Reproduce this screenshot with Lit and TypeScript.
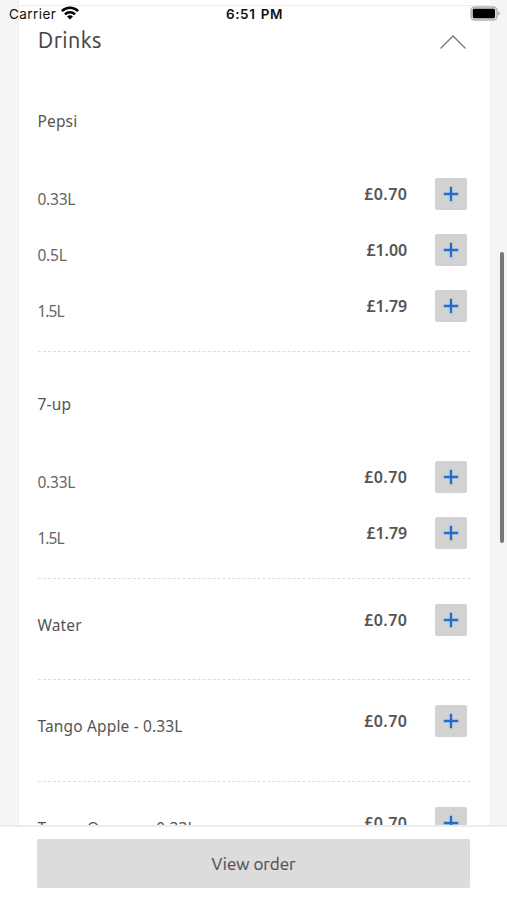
import { LitElement, html, css } from "lit";
import { customElement, property } from "lit/decorators.js";
import { classMap } from "lit/directives/class-map.js";

interface Option {
  name: string;
  price: string;
}

interface Product {
  name: string;
  price?: string;
  options?: Option[];
}

const DRINKS: Product[] = [
  {
    name: "Pepsi",
    options: [
      { name: "0.33L", price: "£0.70" },
      { name: "0.5L", price: "£1.00" },
      { name: "1.5L", price: "£1.79" },
    ],
  },
  {
    name: "7-up",
    options: [
      { name: "0.33L", price: "£0.70" },
      { name: "1.5L", price: "£1.79" },
    ],
  },
  { name: "Water", price: "£0.70" },
  { name: "Tango Apple - 0.33L", price: "£0.70" },
  { name: "Tango Orange - 0.33L", price: "£0.70" },
];

@customElement("status-bar")
class StatusBar extends LitElement {
  static styles = css`
    :host {
      display: grid;
      grid-template-columns: 1fr auto 1fr;
      align-items: center;
      height: 27px;
      padding: 0 7px 0 9px;
      box-sizing: border-box;
      color: #111;
      font: 13px/26px Inter, "Liberation Sans", sans-serif;
    }
    .carrier {
      display: flex;
      align-items: center;
      gap: 5px;
    }
    .label {
      font-size: 13.5px;
      letter-spacing: 0.45px;
    }
    .time {
      font-size: 13.5px;
      font-weight: 600;
      letter-spacing: 0.65px;
      word-spacing: 1px;
    }
    .battery {
      justify-self: end;
    }
    svg {
      display: block;
      position: relative;
      top: -0.5px;
    }
  `;

  render() {
    return html`
      <div class="carrier">
        <span class="label">Carrier</span>
        <svg width="18" height="14" viewBox="0 0 18 14" fill="none" stroke="#000" stroke-width="2.6">
          <path d="M.9 5.1a11.5 11.5 0 0 1 16.2 0" />
          <path d="M4 8.4a7 7 0 0 1 10 0" />
          <path d="M9 13.6 6 10.6a4.2 4.2 0 0 1 6 0z" fill="#000" stroke="none" />
        </svg>
      </div>
      <span class="time">6:51 PM</span>
      <svg class="battery" width="30" height="15" viewBox="0 0 30 15">
        <rect x="1" y="0.9" width="26" height="13.2" rx="3.6" fill="#ddd" stroke="#b4b4b4" stroke-width="1.5" />
        <rect x="2.8" y="2.8" width="22.2" height="9.4" rx="1.4" fill="#000" />
        <path d="M28 5.4q1.8 .6 1.8 2.1t-1.8 2.1z" fill="#aaa" />
      </svg>
    `;
  }
}

@customElement("price-action")
class PriceAction extends LitElement {
  @property() price = "";

  static styles = css`
    :host {
      display: flex;
      align-items: center;
      gap: 28px;
      height: 32px;
    }
    .price {
      font: 600 16px/32px "Noto Sans", sans-serif;
      letter-spacing: 0.45px;
      margin-right: -0.45px;
      color: #555;
    }
    .narrow {
      letter-spacing: -0.1px;
      margin-right: 0;
    }
    .add {
      display: grid;
      place-items: center;
      width: 32px;
      height: 32px;
      padding: 0;
      border: 0;
      border-radius: 2px;
      background: #d2d2d2;
    }
  `;

  render() {
    const classes = { price: true, narrow: this.price.includes("1") };
    return html`
      <span class=${classMap(classes)}>${this.price}</span>
      <button class="add" aria-label="Add">
        <svg width="16" height="16" viewBox="0 0 16 16" stroke="#1e6fd0" stroke-width="2.4">
          <path d="M8 .8v14.4M.8 8h14.4" />
        </svg>
      </button>
    `;
  }
}

@customElement("app-root")
class AppRoot extends LitElement {
  static styles = css`
    :host {
      display: flex;
      flex-direction: column;
      position: relative;
      height: 900px;
      overflow: hidden;
      background: #f5f5f5;
      font-family: "Noto Sans", sans-serif;
      color: #555;
    }
    .status {
      position: absolute;
      inset: 0 0 auto;
    }
    .scroller {
      flex: 1;
      min-height: 0;
      overflow: hidden;
    }
    .card {
      margin: 0 17.5px 0 18.5px;
      padding: 5px 0 0;
      background: #fff;
      box-shadow: 0 0 1px #ddd;
    }
    .head {
      display: flex;
      justify-content: space-between;
      border-top: 1px solid #ececec;
      height: 63.6px;
      padding: 0 23px 0 19.5px;
    }
    .title {
      margin: 0;
      font: 400 21.5px/68px Ubuntu, "Noto Sans", sans-serif;
      letter-spacing: 0.45px;
      color: #444;
      -webkit-text-stroke: 0.15px #444;
    }
    .chevron {
      margin-top: 28px;
    }
    .product {
      margin: 0 19.5px 0 19px;
      border-bottom: 1.5px dashed #ddd;
    }
    .group {
      padding: 38.4px 3px 29px 0;
    }
    .single {
      padding: 25px 3px 43.35px 0;
    }
    .name {
      font-size: 15.5px;
      font-weight: 450;
      line-height: 26px;
      letter-spacing: 0.15px;
      white-space: nowrap;
    }
    .options {
      display: grid;
      gap: 24.1px;
      margin-top: 44.2px;
    }
    .row {
      display: flex;
      justify-content: space-between;
      height: 32px;
    }
    .row .name {
      padding-top: 8px;
    }
    .row .size {
      color: #666;
      letter-spacing: -0.25px;
    }
    .row .tight {
      letter-spacing: -1px;
    }
    .thumb {
      position: absolute;
      top: 252px;
      right: 3px;
      width: 4px;
      height: 291px;
      border-radius: 2px;
      background: #777;
    }
    .footer {
      position: relative;
      height: 75px;
      box-sizing: border-box;
      padding: 12px 37px 0;
      border-top: 2px solid #ececec;
      background: #fff;
    }
    .order {
      display: block;
      width: 100%;
      height: 49px;
      padding: 0;
      border: 0;
      border-radius: 2px;
      background: #dcdcdc;
      color: #555;
      font: 400 17px/49px Ubuntu, "Noto Sans", sans-serif;
      -webkit-text-stroke: 0.2px #555;
    }
  `;

  private row(item: Option, size = false) {
    const classes = { name: true, size, tight: size && item.name.startsWith("1") };
    return html`
      <div class="row">
        <span class=${classMap(classes)}>${item.name}</span>
        <price-action .price=${item.price}></price-action>
      </div>
    `;
  }

  private product(p: Product) {
    return p.options
      ? html`
          <section class="product group">
            <div class="name">${p.name}</div>
            <div class="options">${p.options.map((o) => this.row(o, true))}</div>
          </section>
        `
      : html`<section class="product single">${this.row({ name: p.name, price: p.price ?? "" })}</section>`;
  }

  render() {
    return html`
      <main class="scroller">
        <div class="card">
          <header class="head">
            <h2 class="title">Drinks</h2>
            <svg class="chevron" width="28" height="16" viewBox="0 0 28 16" fill="none" stroke="#777" stroke-width="1.3">
              <path d="M1.5 14.5 14 2l12.5 12.5" />
            </svg>
          </header>
          ${DRINKS.map((p) => this.product(p))}
        </div>
      </main>
      <div class="thumb"></div>
      <footer class="footer">
        <button class="order">View order</button>
      </footer>
      <status-bar class="status"></status-bar>
    `;
  }
}
